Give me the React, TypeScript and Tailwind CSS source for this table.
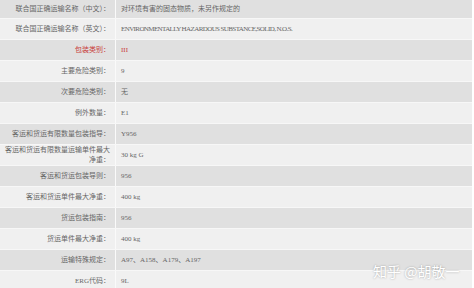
const rows: { label: string; value: string; red?: boolean; tight?: boolean }[] = [
  { label: "联合国正确运输名称（中文）：", value: "对环境有害的固态物质，未另作规定的" },
  { label: "联合国正确运输名称（英文）：", value: "ENVIRONMENTALLY HAZARDOUS SUBSTANCE,SOLID, N.O.S.", tight: true },
  { label: "包装类别：", value: "III", red: true },
  { label: "主要危险类别：", value: "9" },
  { label: "次要危险类别：", value: "无" },
  { label: "例外数量：", value: "E1" },
  { label: "客运和货运有限数量包装指导：", value: "Y956" },
  { label: "客运和货运有限数量运输单件最大净重：", value: "30 kg G" },
  { label: "客运和货运包装导则：", value: "956" },
  { label: "客运和货运单件最大净重：", value: "400 kg" },
  { label: "货运包装指南：", value: "956" },
  { label: "货运单件最大净重：", value: "400 kg" },
  { label: "运输特殊规定：", value: "A97、A158、A179、A197" },
  { label: "ERG代码：", value: "9L" },
];

export default function App() {
  return (
    <div className="relative w-[474px] h-[288px] overflow-hidden bg-white font-['Liberation_Serif','Noto_Sans_CJK_SC',serif] text-[7px] text-[#666]">
      <div className="w-[472px]">
        {rows.map((row, i) => (
          <div
            key={i}
            className={`flex ${i === 0 ? "h-[18px]" : "h-[21px] border-t border-[#f7f7f7]"} ${
              i % 2 === 0 ? "bg-[#e0e0e0]" : "bg-[#f0f0f0]"
            }`}
          >
            <div
              className={`w-[115px] shrink-0 flex items-center justify-end pl-[4px] pr-[5px] text-right leading-[10px] ${
                row.red ? "text-[#c9403c]" : ""
              }`}
            >
              {row.label}
            </div>
            <div className="w-px bg-[#fafafa]" />
            <div
              className={`flex items-center pl-[5px] ${row.red ? "text-[#c9403c]" : ""} ${
                row.tight ? "tracking-[-0.6px]" : ""
              }`}
            >
              {row.value}
            </div>
          </div>
        ))}
      </div>
      <div className="absolute left-[373px] top-[261px] font-['Noto_Sans_CJK_SC',sans-serif] text-[14px] leading-[20px] text-white [text-shadow:0_0_2px_rgba(0,0,0,0.35)]">
        知乎 @胡敬一
      </div>
    </div>
  );
}
